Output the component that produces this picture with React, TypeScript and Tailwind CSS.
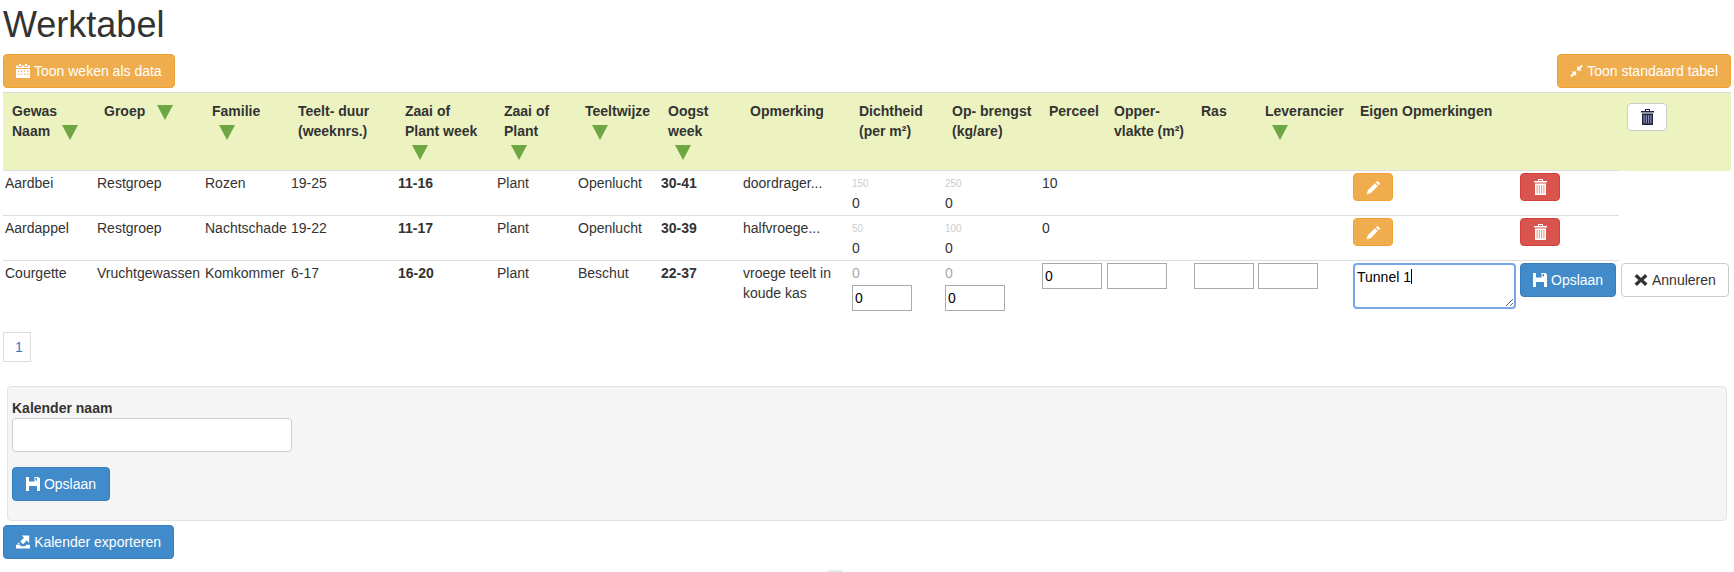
import type { ReactNode } from "react";

function Triangle({ inline }: { inline?: boolean }) {
  return (
    <svg viewBox="0 0 16 15" className={`${inline ? "ml-2" : "ml-[7px]"} inline-block h-[15px] w-4 align-[-4px]`}>
      <path d="M0 0H16L8 15Z" fill="#6da642" />
    </svg>
  );
}

function CalendarIcon() {
  return (
    <svg viewBox="0 0 14 14" className="h-3.5 w-3.5 fill-current">
      <path d="M3 0h2v2H3zM9 0h2v2H9zM0 1.5h2.500v1.500h3V1.500h3v1.500h3V1.500H14V4H0zM0 5h14v9H0z" />
      <path d="M2 6.500h1.500V8H2zM5 6.500h1.500V8H5zM8 6.500h1.500V8H8zM11 6.500h1.500V8H11zM2 9.500h1.500V11H2zM5 9.500h1.500V11H5zM8 9.500h1.500V11H8zM11 9.500h1.500V11H11z" fill="#f6c27c" />
    </svg>
  );
}

function ResizeSmallIcon() {
  return (
    <svg viewBox="0 0 14 14" className="h-3.5 w-3.5 fill-current">
      <path d="M7.500 6.500V1.500l1.700 1.700L12 .4 13.600 2l-2.800 2.800 1.700 1.700zM6.500 7.500v5l-1.700-1.700L2 13.600.4 12l2.800-2.800-1.700-1.700z" />
    </svg>
  );
}

function SaveIcon() {
  return (
    <svg viewBox="0 0 14 14" className="h-3.5 w-3.5 fill-current">
      <path fillRule="evenodd" d="M0 0h12.500L14 1.500V14H0zM3 0v4.500h5.500V0zM9.500 1v2.500H11V1zM3 9v5h8V9z" />
    </svg>
  );
}

function ExportIcon() {
  return (
    <svg viewBox="0 0 15 14" className="h-3.5 w-[15px] fill-current">
      <path d="M6 0h8v8l-2.500-2.500-4 4-3-3 4-4zM0 10h4l1.500 1.500h4L11 10h4v4H0zM3 7.500l1 2H1z" />
    </svg>
  );
}

function PencilIcon() {
  return (
    <svg viewBox="0 0 14 14" className="h-[15px] w-[15px] fill-current">
      <path d="M10.700.8l2.600 2.600-1.500 1.500-2.600-2.600zM8.400 3.100l2.600 2.600-6.600 6.600-3.800 1.100 1.100-3.800z" />
    </svg>
  );
}

function TrashIcon({ stripe }: { stripe: string }) {
  return (
    <svg viewBox="0 0 13 16" className="h-4 w-[13px] fill-current">
      <path fillRule="evenodd" d="M4 0h5v2h4v1.500H0V2h4zM5 1v1h3V1zM1 4.500h11V16H1z" />
      <path d="M2.500 6h1.200v8.500H2.500zM4.800 6H6v8.500H4.800zM7 6h1.200v8.500H7zM9.300 6h1.200v8.500H9.300z" fill={stripe} />
    </svg>
  );
}

function CloseIcon() {
  return (
    <svg viewBox="0 0 14 14" className="h-3.5 w-3.5 fill-current">
      <path d="M3 1l4 4 4-4 2.500 2.500-4 3.500 4 3.500L11 13 7 9l-4 4-2.500-2.500 4-3.500-4-3.500z" />
    </svg>
  );
}

function Btn({ color, icon, children, className }: { color: "warning" | "primary" | "default"; icon: ReactNode; children: ReactNode; className?: string }) {
  const colors = {
    warning: "bg-[#f0ad4e] border-[#eea236] text-white",
    primary: "bg-[#428bca] border-[#357ebd] text-white",
    default: "bg-white border-[#cccccc] text-[#333333]",
  };
  return (
    <button className={`flex h-[34px] items-center gap-1 rounded border px-3 whitespace-nowrap ${colors[color]} ${className ?? ""}`}>
      {icon}
      {children}
    </button>
  );
}

function IconBtn({ color, children }: { color: "warning" | "danger" | "default"; children: ReactNode }) {
  const colors = {
    warning: "bg-[#f0ad4e] border-[#eea236] text-white",
    danger: "bg-[#d9534f] border-[#d43f3a] text-white",
    default: "bg-white border-[#cccccc] text-[#222244]",
  };
  return <button className={`flex h-7 w-10 items-center justify-center rounded border ${colors[color]}`}>{children}</button>;
}

function NumInput() {
  return <input readOnly defaultValue="0" className="block h-[26px] w-[60px] border border-[#a9a9a9] px-0.5 text-black" />;
}

function EmptyInput() {
  return <input readOnly className="block h-[26px] w-[60px] border border-[#a9a9a9] px-0.5 text-black" />;
}

const headers: ReactNode[] = [
  <>Gewas<br />Naam <Triangle inline /></>,
  <>Groep <Triangle inline /></>,
  <>Familie<br /><Triangle /></>,
  <>Teelt- duur<br />(weeknrs.)</>,
  <>Zaai of<br />Plant week<br /><Triangle /></>,
  <>Zaai of<br />Plant<br /><Triangle /></>,
  <>Teeltwijze<br /><Triangle /></>,
  <>Oogst<br />week<br /><Triangle /></>,
  <>Opmerking</>,
  <>Dichtheid<br />(per m²)</>,
  <>Op- brengst<br />(kg/are)</>,
  <>Perceel</>,
  <>Opper-<br />vlakte (m²)</>,
  <>Ras</>,
  <>Leverancier<br /><Triangle /></>,
  <>Eigen Opmerkingen</>,
];

const colWidths = ["w-[92px]", "w-[108px]", "w-[86px]", "w-[107px]", "w-[99px]", "w-[81px]", "w-[83px]", "w-[82px]", "w-[109px]", "w-[93px]", "w-[97px]", "w-[65px]", "w-[87px]", "w-[64px]", "w-[95px]", "w-[167px]", "w-[101px]", "w-[112px]"];

const rows = [
  { gewas: "Aardbei", groep: "Restgroep", familie: "Rozen", duur: "19-25", zaai: "11-16", plant: "Plant", wijze: "Openlucht", oogst: "30-41", opm: "doordrager...", dicht: "150", brengst: "250", perceel: "10" },
  { gewas: "Aardappel", groep: "Restgroep", familie: "Nachtschade", duur: "19-22", zaai: "11-17", plant: "Plant", wijze: "Openlucht", oogst: "30-39", opm: "halfvroege...", dicht: "50", brengst: "100", perceel: "0" },
];

const cell = "border-t border-[#dddddd] px-0.5 pt-0.5 align-top";
const td = `${cell} whitespace-nowrap`;

export default function App() {
  return (
    <div className="bg-white text-sm leading-5 text-[#333333] font-['Liberation_Sans',Arial,sans-serif] overflow-hidden h-[572px]">
      <h1 className="pl-[3px] pt-[5px] text-[36px] leading-[40px] font-normal">Werktabel</h1>

      <div className="mt-[9px] flex justify-between pl-[3px] pr-[3px]">
        <Btn color="warning" icon={<CalendarIcon />}>Toon weken als data</Btn>
        <Btn color="warning" icon={<ResizeSmallIcon />} className="w-[174px] justify-center px-0">Toon standaard tabel</Btn>
      </div>

      <table className="mt-1 ml-[3px] w-[1728px] table-fixed border-collapse">
        <colgroup>
          {colWidths.map((w) => (
            <col key={w} className={w} />
          ))}
        </colgroup>
        <thead>
          <tr className="h-[78px] bg-[#ecf3c1]">
            {headers.map((h, i) => (
              <th key={i} className="border-t border-[#dddddd] pt-2 pr-2 pb-1 pl-[9px] text-left align-top font-bold whitespace-nowrap">{h}</th>
            ))}
            <th className="border-t border-[#dddddd]" />
            <th className="border-t border-[#dddddd] pt-[10px] pl-[8px] align-top">
              <IconBtn color="default"><TrashIcon stripe="#8a8fb0" /></IconBtn>
            </th>
          </tr>
        </thead>
        <tbody>
          {rows.map((r) => (
            <tr key={r.gewas} className="h-[45px]">
              <td className={td}>{r.gewas}</td>
              <td className={td}>{r.groep}</td>
              <td className={td}>{r.familie}</td>
              <td className={td}>{r.duur}</td>
              <td className={`${td} font-bold`}>{r.zaai}</td>
              <td className={td}>{r.plant}</td>
              <td className={td}>{r.wijze}</td>
              <td className={`${td} font-bold`}>{r.oogst}</td>
              <td className={td}>{r.opm}</td>
              <td className={td}>
                <div className="h-5 pt-[2px] text-[10px] leading-[18px] text-[#cccccc]">{r.dicht}</div>
                <div>0</div>
              </td>
              <td className={td}>
                <div className="h-5 pt-[2px] text-[10px] leading-[18px] text-[#cccccc]">{r.brengst}</div>
                <div>0</div>
              </td>
              <td className={td}>{r.perceel}</td>
              <td className={td} />
              <td className={td} />
              <td className={td} />
              <td className={td}>
                <IconBtn color="warning"><PencilIcon /></IconBtn>
              </td>
              <td className={td}>
                <IconBtn color="danger"><TrashIcon stripe="#f2a58a" /></IconBtn>
              </td>
            </tr>
          ))}
          <tr>
            <td className={td}>Courgette</td>
            <td className={td}>Vruchtgewassen</td>
            <td className={td}>Komkommer</td>
            <td className={td}>6-17</td>
            <td className={`${td} font-bold`}>16-20</td>
            <td className={td}>Plant</td>
            <td className={td}>Beschut</td>
            <td className={`${td} font-bold`}>22-37</td>
            <td className={cell}>vroege teelt in koude kas</td>
            <td className={td}>
              <div className="text-[#aaaaaa]">0</div>
              <div className="mt-0.5"><NumInput /></div>
            </td>
            <td className={td}>
              <div className="text-[#aaaaaa]">0</div>
              <div className="mt-0.5"><NumInput /></div>
            </td>
            <td className={td}><NumInput /></td>
            <td className={td}><EmptyInput /></td>
            <td className={td}><EmptyInput /></td>
            <td className={td}><EmptyInput /></td>
            <td className={td}>
              <div className="relative w-[163px]">
                <textarea
                  readOnly
                  defaultValue="Tunnel 1"
                  className="block h-[46px] w-[163px] rounded-sm border-2 border-[#7aa5e8] px-0.5 py-0.5 text-black"
                />
                <span className="absolute top-[6px] left-[58px] h-[15px] w-px bg-black" />
              </div>
            </td>
            <td className={td}>
              <Btn color="primary" icon={<SaveIcon />}>Opslaan</Btn>
            </td>
            <td className="pt-0.5 align-top">
              <Btn color="default" icon={<CloseIcon />} className="ml-0.5">Annuleren</Btn>
            </td>
          </tr>
        </tbody>
      </table>

      <div className="mt-[21px] ml-[3px] flex h-[30px] w-[28px] items-center justify-center border border-[#dddddd] pl-1 text-[#337ab7]">1</div>

      <div className="mt-[24px] mr-[7px] ml-[7px] h-[135px] rounded border border-[#e3e3e3] bg-[#f5f5f5] px-[4px] pt-[11px]">
        <label className="block font-bold">Kalender naam</label>
        <input readOnly className="block h-[34px] w-[280px] rounded border border-[#cccccc] bg-white" />
        <Btn color="primary" icon={<SaveIcon />} className="mt-[15px] w-[98px] justify-center px-0">Opslaan</Btn>
      </div>

      <div className="mt-[4px] pl-[3px]">
        <Btn color="primary" icon={<ExportIcon />} className="w-[171px] justify-center px-0">Kalender exporteren</Btn>
      </div>
      <div className="mt-[11px] ml-[827px] h-0.5 w-4 rounded-t-full bg-[#dcefec]" />
    </div>
  );
}
